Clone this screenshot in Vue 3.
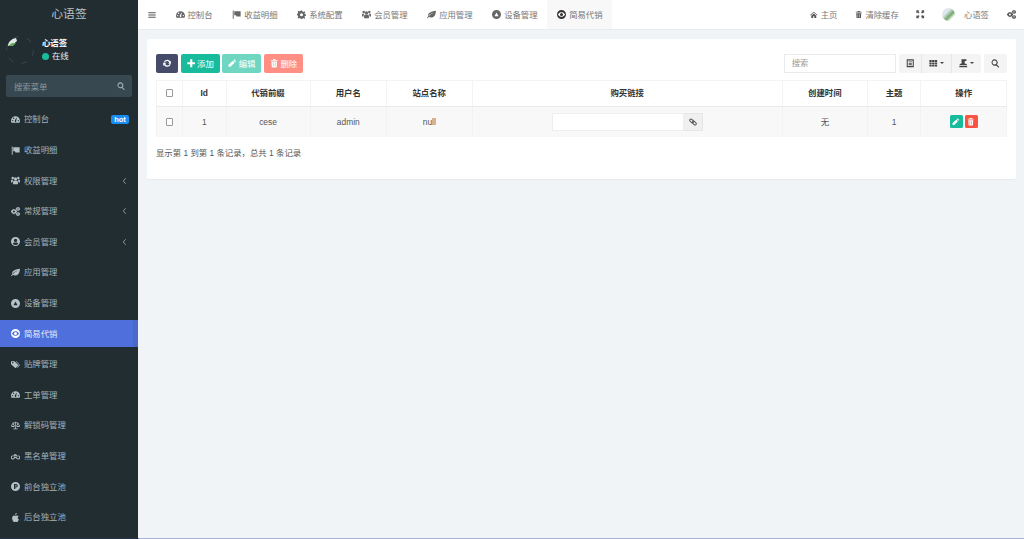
<script setup>
const icons = {
  dashboard: 'M12 3C5.400 3 0 8.400 0 15c0 2 .5 3.900 1.400 5.500h21.200c.9-1.600 1.400-3.500 1.400-5.500C24 8.400 18.600 3 12 3zM4.500 16.700a1.800 1.800 0 110-3.600 1.800 1.800 0 010 3.600zM7 10.500a1.800 1.800 0 110-3.600 1.800 1.800 0 010 3.600zm6.800 7.500a2.500 2.500 0 01-3.600-3.300l4-7.500 1.300.5-1.700 7.500a2.500 2.500 0 010 2.800zM19.500 16.700a1.800 1.800 0 110-3.600 1.800 1.800 0 010 3.600z',
  flag: 'M2 1h2.500v22H2zM6 3h17v14H12l-1.500-3H6z',
  users: 'M12 3.500a4.200 4.200 0 110 8.400 4.200 4.200 0 010-8.400zM4.500 2a3.300 3.300 0 110 6.600 3.300 3.300 0 010-6.600zm15 0a3.300 3.300 0 110 6.600 3.300 3.300 0 010-6.600zM5.500 22v-6c0-2.200 1.800-3.500 3.500-3.500h6c1.700 0 3.500 1.300 3.500 3.500v6zM0 17v-4.500C0 11 1 9.800 2.500 9.800h4C5 11 4 13 4 16v1zm24 0v-4.500c0-1.500-1-2.700-2.500-2.700h-4c1.500 1.200 2.500 3.200 2.500 6.200v1z',
  gears: 'M9 5l1.300 2.300 2.600-.4.800 2.500 2.300 1.200v2.800l-2.300 1.200-.8 2.500-2.600-.4L9 19H6.700l-1.300-2.300-2.600.4-.8-2.500L-.3 13.400v-2.800L2 9.400l.8-2.500 2.600.4L6.700 5zm-1.200 4.200a2.800 2.800 0 100 5.600 2.800 2.800 0 000-5.600zM19.500 0l1 1.600 1.900-.2.600 1.900 1.500 1v1.900l-1.500 1-.6 1.900-1.900-.2-1 1.600h-1.700l-1-1.600-1.900.2-.6-1.900-1.500-1V4.300l1.500-1 .6-1.900 1.900.2 1-1.600zm-.9 3.400a1.700 1.700 0 100 3.400 1.700 1.700 0 000-3.400zM19.500 13.500l1 1.600 1.900-.2.600 1.900 1.500 1v1.900l-1.500 1-.6 1.900-1.900-.2-1 1.600h-1.700l-1-1.600-1.900.2-.6-1.900-1.500-1v-1.900l1.500-1 .6-1.900 1.900.2 1-1.600zm-.9 3.400a1.700 1.700 0 100 3.400 1.700 1.700 0 000-3.400z',
  cog: 'M10 1h4l.6 3 2.300 1 2.600-1.700 2.800 2.800L20 8.700l1 2.300 3 .6v4l-3 .6-1 2.300 1.700 2.600-2.800 2.800L17 21l-2.300 1-.6 3h-4l-.6-3L7 21l-2.600 1.700-2.800-2.800L3.300 17l-1-2.300-3-.6v-4l3-.6 1-2.300L1.600 4.600 4.400 1.800 7 3.500 9.400 2.500zM12 8.500a4 4 0 100 8 4 4 0 000-8z',
  user: 'M12 0a12 12 0 100 24 12 12 0 000-24zm0 4.500a4.500 4.500 0 110 9 4.500 4.500 0 010-9zm0 17a9.500 9.500 0 01-7.300-3.400c.5-2 2.600-3.600 4.300-3.600h6c1.700 0 3.800 1.600 4.300 3.600A9.500 9.500 0 0112 21.500z',
  leaf: 'M24 2c-1 11-4.500 18-13 18-2.500 0-4.500-.6-6-1.700L2 22l-2-1.500 3.200-4C1.500 8.500 9 4 24 2zM5.500 16c3-4.500 8-7 12.500-8.500-5 .5-10.500 3.500-14 8z',
  device: 'M12 0a12 12 0 100 24 12 12 0 000-24zM6.500 16.500L12 6.500l5.500 10z',
  eye: 'M12 0a12 12 0 100 24 12 12 0 000-24zM2.500 12C5 7.500 8.500 6 12 6s7 1.500 9.500 6c-2.500 4.500-6 6-9.500 6s-7-1.500-9.500-6zM12 8a4 4 0 100 8 4 4 0 000-8z',
  tags: 'M0 3h9.500l10.500 11-8 8L0 11zM4.500 5.500a2 2 0 100 4 2 2 0 000-4zM13 3h2l9 11-7 7-1-1 6-6z',
  scale: 'M11 2h2v2h6l5 9c0 2-2.500 3-5 3s-5-1-5-3l3.500-7H13v14h5v2H6v-2h5V6H6.500l3.500 7c0 2-2.500 3-5 3s-5-1-5-3l5-9h6zM5 8l-2.800 5h5.600zm14 0l-2.800 5h5.600z',
  bike: 'M5 9a5.500 5.500 0 100 11A5.500 5.500 0 005 9zm0 2.500a3 3 0 110 6 3 3 0 010-6zM19 9a5.500 5.500 0 100 11 5.500 5.500 0 000-11zm0 2.500a3 3 0 110 6 3 3 0 010-6zM8 6h6l3 6-5 4-2-1 3-3-2-3-3 3-2-1z',
  parking: 'M12 0a12 12 0 100 24 12 12 0 000-24zM8 5.500h5.500a4.700 4.700 0 010 9.400h-2v3.600H8zm3.500 3v3.400h2a1.700 1.700 0 000-3.400z',
  apple: 'M15.500 0c.2 2.800-2 5.300-4.500 5C10.800 2.500 13 .2 15.500 0zM8 6.500c1.500 0 2.500 1 3.800 1s2.700-1 4.500-1c1.500 0 3 .8 4 2.200-3.500 2-3 7 .7 8.500-1 2.500-3 6.800-5 6.800-1.300 0-2-.9-3.700-.9s-2.500.9-3.700.9C6 24 3 18.500 3 14c0-4.500 2.500-7.500 5-7.500z',
  home: 'M12 2l12 11-1.500 1.500L12 5 1.500 14.500 0 13zM4 15l8-7 8 7v7.500h-6V17h-4v5.500H4z',
  trash: 'M9 0h6l1 2.500h5.500V5h-19V2.500H8zM4 7h16l-1 15.500a1.500 1.500 0 01-1.500 1.500h-11A1.500 1.500 0 015 22.500zM8.500 10v10.500H10V10zm5.500 0v10.500h1.500V10z',
  expand: 'M1 1h8L6.800 3.200 10 6.500 6.500 10 3.200 6.800 1 9zm22 0v8l-2.200-2.200L17.500 10 14 6.500l3.200-3.300L15 1zM1 23v-8l2.200 2.200L6.500 14l3.500 3.500-3.200 3.300L9 23zm22 0h-8l2.200-2.200-3.200-3.300 3.500-3.500 3.300 3.200L23 15z',
  bars: 'M1 4h22v3H1zM1 10.500h22v3H1zM1 17h22v3H1z',
  refresh: 'M12 2a10 10 0 018.800 5.200L23.500 4.500v9h-9l3.300-3.300A6.500 6.500 0 005.800 9.500H2.200A10 10 0 0112 2zM.5 10.500h9l-3.300 3.300a6.500 6.500 0 0012 .7h3.600A10 10 0 013.200 16.800L.5 19.500z',
  plus: 'M9 1h6v8h8v6h-8v8H9v-8H1V9h8z',
  pencil: 'M18 1l5 5-2.500 2.500-5-5zM14 5l5 5L7 22H1.500v-5.500z',
  search: 'M10 1a9 9 0 016.800 14.800l6.500 6.500-2.200 2.200-6.500-6.500A9 9 0 1110 1zm0 3.200a5.800 5.800 0 100 11.600 5.800 5.800 0 000-11.600z',
  list: 'M2 1h20v22H2zM5 4v16h14V4zM7.500 7h9v2.500h-9zm0 4h9v2.500h-9zm0 4h9v2.500h-9z',
  grid: 'M1 3h6.500v5.500H1zm7.800 0h6.400v5.500H8.800zm7.700 0H23v5.500h-6.500zM1 9.800h6.500v5H1zm7.800 0h6.400v5H8.800zm7.700 0H23v5h-6.500zM1 16h6.500v5.500H1zm7.800 0h6.400v5.500H8.800zm7.700 0H23v5.500h-6.500z',
  export: 'M7 1h14v4l-5 1v7l6 1v3H2v-3l6-2-1-4zM1 19h22v4H1z'
}

const menus = [
  { name: '控制台', icon: 'dashboard', badge: 'hot' },
  { name: '收益明细', icon: 'flag' },
  { name: '权限管理', icon: 'users', sub: true },
  { name: '常规管理', icon: 'gears', sub: true },
  { name: '会员管理', icon: 'user', sub: true },
  { name: '应用管理', icon: 'leaf' },
  { name: '设备管理', icon: 'device' },
  { name: '简易代销', icon: 'eye', active: true },
  { name: '贴牌管理', icon: 'tags' },
  { name: '工单管理', icon: 'dashboard' },
  { name: '解锁码管理', icon: 'scale' },
  { name: '黑名单管理', icon: 'bike' },
  { name: '前台独立池', icon: 'parking' },
  { name: '后台独立池', icon: 'apple' }
]

const tabs = [
  { name: '控制台', icon: 'dashboard' },
  { name: '收益明细', icon: 'flag' },
  { name: '系统配置', icon: 'cog' },
  { name: '会员管理', icon: 'users' },
  { name: '应用管理', icon: 'leaf' },
  { name: '设备管理', icon: 'device' },
  { name: '简易代销', icon: 'eye', active: true }
]

const columns = [
  { title: '代销前缀', width: 84 },
  { title: '用户名', width: 76.500 },
  { title: '站点名称', width: 85.500 }
]
</script>

<template>
  <div class="page">
    <aside class="sidebar">
      <div class="logo">心语签</div>
      <div class="profile">
        <svg class="avatar" viewBox="0 0 28 28">
          <circle cx="14" cy="14" r="13.500" fill="none" stroke="#3f4b51" stroke-width=".8" stroke-dasharray="6 8" />
          <path d="M2 10C2 6 5 3 10 2l1 3-6 5z" fill="#dfeae2" />
          <path d="M2 10l4-3 4 0-3 3z" fill="#6aa85f" />
        </svg>
        <div class="who">
          <div class="who-name">心语签</div>
          <div class="who-state"><i class="dot"></i>在线</div>
        </div>
      </div>
      <div class="side-search">
        <span>搜索菜单</span>
        <svg class="ico" viewBox="0 0 24 24"><path :d="icons.search" /></svg>
      </div>
      <nav class="menu">
        <a v-for="m in menus" :key="m.name" class="menu-item" :class="{ active: m.active }">
          <svg class="ico menu-ico" viewBox="0 0 24 24"><path :d="icons[m.icon]" /></svg>
          <span class="menu-name">{{ m.name }}</span>
          <b v-if="m.badge" class="badge">{{ m.badge }}</b>
          <svg v-if="m.sub" class="chev" viewBox="0 0 6 10"><path d="M4.500 1.500L1.500 5l3 3.500" /></svg>
        </a>
      </nav>
    </aside>

    <div class="main">
      <header class="topbar">
        <svg class="ico burger" viewBox="0 0 24 24"><path :d="icons.bars" /></svg>
        <div class="tabs">
          <a v-for="t in tabs" :key="t.name" class="tab" :class="{ active: t.active }">
            <svg class="ico" viewBox="0 0 24 24"><path :d="icons[t.icon]" /></svg>
            <span>{{ t.name }}</span>
          </a>
        </div>
        <div class="top-right">
          <a class="top-link home"><svg class="ico" viewBox="0 0 24 24"><path :d="icons.home" /></svg>主页</a>
          <a class="top-link clear"><svg class="ico" viewBox="0 0 24 24"><path :d="icons.trash" /></svg>清除缓存</a>
          <svg class="ico full" viewBox="0 0 24 24"><path :d="icons.expand" /></svg>
          <i class="top-avatar"></i>
          <span class="top-name">心语签</span>
          <svg class="ico gear" viewBox="0 0 24 24"><path :d="icons.gears" /></svg>
        </div>
      </header>

      <section class="content">
        <div class="card">
          <div class="toolbar">
            <button class="btn refresh"><svg class="ico" viewBox="0 0 24 24"><path :d="icons.refresh" /></svg></button>
            <button class="btn add"><svg class="ico" viewBox="0 0 24 24"><path :d="icons.plus" /></svg>添加</button>
            <button class="btn edit"><svg class="ico" viewBox="0 0 24 24"><path :d="icons.pencil" /></svg>编辑</button>
            <button class="btn del"><svg class="ico" viewBox="0 0 24 24"><path :d="icons.trash" /></svg>删除</button>
            <div class="spacer"></div>
            <input class="search" placeholder="搜索" />
            <div class="group">
              <button class="tool narrow"><svg class="ico" viewBox="0 0 24 24"><path :d="icons.list" /></svg></button>
              <button class="tool"><svg class="ico" viewBox="0 0 24 24"><path :d="icons.grid" /></svg><i class="caret"></i></button>
              <button class="tool"><svg class="ico" viewBox="0 0 24 24"><path :d="icons.export" /></svg><i class="caret"></i></button>
            </div>
            <button class="tool single"><svg class="ico" viewBox="0 0 24 24"><path :d="icons.search" /></svg></button>
          </div>

          <table class="grid">
            <colgroup>
              <col style="width: 26px" />
              <col style="width: 43.500px" />
              <col v-for="c in columns" :key="c.title" :style="{ width: c.width + 'px' }" />
              <col />
              <col style="width: 85px" />
              <col style="width: 53.500px" />
              <col style="width: 85.700px" />
            </colgroup>
            <thead>
              <tr>
                <th><i class="check"></i></th>
                <th>Id</th>
                <th v-for="c in columns" :key="c.title">{{ c.title }}</th>
                <th>购买链接</th>
                <th>创建时间</th>
                <th>主题</th>
                <th>操作</th>
              </tr>
            </thead>
            <tbody>
              <tr>
                <td><i class="check"></i></td>
                <td>1</td>
                <td>cese</td>
                <td>admin</td>
                <td>null</td>
                <td>
                  <div class="link-box">
                    <input class="link-input" />
                    <span class="link-addon">
                      <svg class="ico chain" viewBox="0 0 24 24">
                        <rect x="1.500" y="5" width="13" height="7.500" rx="3.700" transform="rotate(45 8 8.700)" />
                        <rect x="9.500" y="11.500" width="13" height="7.500" rx="3.700" transform="rotate(45 16 15.300)" />
                      </svg>
                    </span>
                  </div>
                </td>
                <td>无</td>
                <td>1</td>
                <td>
                  <div class="ops">
                    <span class="op green"><svg class="ico" viewBox="0 0 24 24"><path :d="icons.pencil" /></svg></span>
                    <span class="op red"><svg class="ico" viewBox="0 0 24 24"><path :d="icons.trash" /></svg></span>
                  </div>
                </td>
              </tr>
            </tbody>
          </table>

          <p class="summary">显示第 1 到第 1 条记录，总共 1 条记录</p>
        </div>
      </section>
    </div>
    <i class="edge"></i>
  </div>
</template>

<style>
html,
body {
  margin: 0;
  height: 100%;
  overflow: hidden;
}
</style>

<style scoped>
.page {
  position: relative;
  display: flex;
  width: 1024px;
  height: 539px;
  overflow: hidden;
  font-family: "Liberation Sans", "Noto Sans CJK SC", sans-serif;
  font-size: 8.400px;
  color: #444;
}
.edge {
  position: absolute;
  left: 0;
  right: 0;
  bottom: 0;
  height: 1px;
  background: linear-gradient(90deg, #26344a 0, #26344a 138px, #a5b4d6 139px, #a5b4d6 100%);
}
.ico {
  display: block;
  width: 9px;
  height: 9px;
  fill: currentColor;
  flex: none;
}

/* 左侧菜单 */
.sidebar {
  width: 138px;
  flex: none;
  background: #222d32;
  display: flex;
  flex-direction: column;
}
.logo {
  height: 28px;
  line-height: 28px;
  text-align: center;
  font-size: 11.800px;
  color: #b8c0c4;
}
.profile {
  height: 46.700px;
  padding: 0 0 3px 6px;
  box-sizing: border-box;
  display: flex;
  align-items: center;
}
.avatar {
  width: 28px;
  height: 28px;
  margin-right: 8px;
}
.who-name {
  color: #fff;
  font-weight: 700;
  line-height: 10px;
  margin-bottom: 3px;
}
.who-state {
  display: flex;
  align-items: center;
  gap: 3px;
  line-height: 10px;
  color: #e8ecee;
}
.dot {
  width: 7px;
  height: 7px;
  border-radius: 50%;
  background: #18bc9c;
}
.side-search {
  height: 22px;
  margin: 0 6px;
  padding: 0 7px 0 8px;
  background: #374850;
  border-radius: 2px;
  display: flex;
  align-items: center;
  justify-content: space-between;
  color: #8a979e;
}
.side-search .ico {
  width: 8px;
  height: 8px;
  color: #a5b0b5;
}
.menu {
  margin-top: 9.300px;
  display: flex;
  flex-direction: column;
  gap: 3.600px;
}
.menu-item {
  height: 27px;
  display: flex;
  align-items: center;
  padding: 0 6px 0 10.500px;
  color: #b4c1c7;
}
.menu-ico {
  margin-right: 4.500px;
}
.menu-name {
  flex: 1;
  line-height: 10px;
  color: #a4b2b8;
}
.menu-item.active {
  background: #4e6fdc;
  box-shadow: inset -5px 0 0 #4c68c8;
  color: #fff;
}
.menu-item.active .menu-name {
  color: #e8ecf8;
}
.badge {
  font-size: 7.500px;
  line-height: 9px;
  padding: 0 3.500px;
  margin-right: 2.700px;
  border-radius: 2px;
  background: #1b8cf2;
  color: #fff;
}
.chev {
  width: 5px;
  height: 8px;
  margin-right: 5px;
  fill: none;
  stroke: #8a989f;
  stroke-width: 1.200;
}

/* 顶栏 */
.main {
  flex: 1;
  min-width: 0;
  display: flex;
  flex-direction: column;
  background: #f1f4f6;
}
.topbar {
  height: 29px;
  flex: none;
  background: #fff;
  border-bottom: 1px solid #e8ecf0;
  display: flex;
  align-items: center;
  color: #777;
}
.burger {
  width: 8px;
  height: 8px;
  margin: 0 9.500px 0 10px;
  color: #555;
}
.tabs {
  display: flex;
  height: 100%;
}
.tab {
  display: flex;
  align-items: center;
  padding: 0 9.500px 0 10px;
  color: #777;
}
.tab span {
  line-height: 10px;
}
.tab .ico {
  margin-right: 3px;
  color: #666;
}
.tab.active {
  background: #f8f8f8;
}
.tab.active .ico {
  color: #333;
}
.top-right {
  margin-left: auto;
  display: flex;
  align-items: center;
  padding-right: 8px;
}
.top-link {
  display: flex;
  align-items: center;
  gap: 3px;
  line-height: 10px;
}
.top-link .ico {
  width: 7.500px;
  height: 7.500px;
  color: #555;
}
.clear {
  margin-left: 17.500px;
}
.full {
  width: 8.500px;
  height: 8.500px;
  margin-left: 17.500px;
  color: #555;
}
.top-avatar {
  width: 13px;
  height: 13px;
  margin-left: 17.500px;
  border-radius: 50%;
  background: linear-gradient(135deg, #dfe7ee 35%, #74a86c 60%, #fff 80%);
}
.top-name {
  margin-left: 8.500px;
  line-height: 10px;
}
.gear {
  margin-left: 18px;
  color: #555;
}

/* 内容卡片 */
.content {
  padding: 9px 8px 0 9px;
}
.card {
  height: 140px;
  box-sizing: border-box;
  padding: 14.500px 9px 0;
  background: #fff;
  border-radius: 2px;
  box-shadow: 0 1px 1px #e6eaee;
}
.toolbar {
  display: flex;
  align-items: stretch;
  height: 19.500px;
  gap: 2.700px;
}
.spacer {
  flex: 1;
}
.btn {
  border: 0;
  padding: 0;
  width: 39px;
  border-radius: 2px;
  color: #fff;
  font: inherit;
  display: flex;
  align-items: center;
  justify-content: center;
  gap: 2px;
}
.btn .ico {
  width: 8.500px;
  height: 8.500px;
}
.refresh {
  width: 22px;
  background: #444c69;
}
.add {
  background: #18bc9c;
}
.edit {
  background: #6fd6c2;
}
.del {
  background: #ff8e84;
}
.search {
  width: 112px;
  box-sizing: border-box;
  padding: 0 7px;
  border: 1px solid #e8ecef;
  font: inherit;
  outline: 0;
}
.search::placeholder {
  color: #999;
}
.group {
  display: flex;
  margin-left: .5px;
  border-radius: 2px;
  overflow: hidden;
}
.tool {
  width: 30px;
  padding: 0;
  border: 0;
  border-left: 1px solid #e6e6e6;
  background: #f4f4f4;
  color: #444;
  display: flex;
  align-items: center;
  justify-content: center;
  gap: 2px;
}
.tool.narrow {
  width: 22px;
  border-left: 0;
}
.tool.single {
  width: 23px;
  margin-left: .5px;
  border: 0;
  border-radius: 2px;
}
.tool .ico {
  width: 8.500px;
  height: 8.500px;
}
.caret {
  width: 0;
  height: 0;
  border: 2px solid transparent;
  border-top-color: #444;
  border-bottom: 0;
}

/* 表格 */
.grid {
  width: 851px;
  margin-top: 6.700px;
  border-collapse: collapse;
  table-layout: fixed;
  text-align: center;
}
.grid th,
.grid td {
  padding: 0;
  line-height: 10px;
  border: 1px solid #f3f3f3;
}
.grid th {
  height: 26px;
  box-sizing: border-box;
  color: #333;
  border-bottom: 1px solid #e9ecef;
}
.grid td {
  height: 31px;
  box-sizing: border-box;
  background: #f8f8f8;
  color: #555;
  border-top: 0;
  border-bottom: 0;
}
.check {
  display: block;
  box-sizing: border-box;
  width: 7.500px;
  height: 7.500px;
  margin: 0 auto;
  border: 1px solid #999;
  border-radius: 1px;
  background: #fff;
}
.link-box {
  display: flex;
  width: 151px;
  height: 18px;
  margin: 0 auto;
}
.link-input {
  flex: 1;
  min-width: 0;
  box-sizing: border-box;
  border: 1px solid #eceff1;
  background: #fff;
  outline: 0;
}
.link-addon {
  width: 19px;
  display: flex;
  align-items: center;
  justify-content: center;
  background: #f0f0f0;
  border: 1px solid #e6e6e6;
  border-left: 0;
  box-sizing: border-box;
  color: #555;
}
.link-addon .chain {
  width: 8px;
  height: 8px;
  fill: none;
  stroke: currentColor;
  stroke-width: 3;
}
.ops {
  display: flex;
  justify-content: center;
  gap: 2px;
}
.op {
  width: 13px;
  height: 13px;
  border-radius: 1.500px;
  display: flex;
  align-items: center;
  justify-content: center;
  color: #fff;
}
.op .ico {
  width: 7.500px;
  height: 7.500px;
}
.green {
  background: #18bc9c;
}
.red {
  background: #f75444;
}
.summary {
  margin: 10.500px 0 0;
  color: #555;
  line-height: 10px;
}
</style>
